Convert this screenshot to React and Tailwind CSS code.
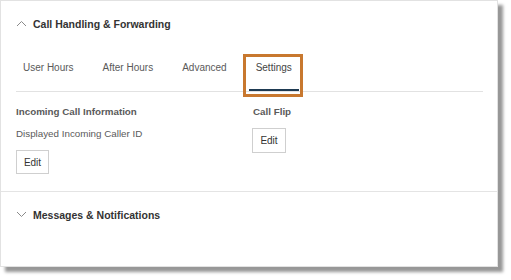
import React from "react";

function Chevron({ up }) {
  return (
    <svg width="11" height="7" viewBox="0 0 11 7" className="shrink-0">
      <polyline
        points={up ? "1,6 5.5,1.5 10,6" : "1,1 5.5,5.5 10,1"}
        fill="none"
        stroke="#8a8a8a"
        strokeWidth="1"
      />
    </svg>
  );
}

const tabs = ["User Hours", "After Hours", "Advanced", "Settings"];

export default function App() {
  return (
    <div
      className="relative w-[511px] h-[280px] bg-white overflow-hidden"
      style={{ fontFamily: '"Liberation Sans", Arial, sans-serif' }}
    >
      <div className="w-[498px] h-[267px] bg-white border border-[#e2e2e2] shadow-[5px_5px_3px_#979797] flex flex-col">
        <div className="border-b border-[#e4e4e4]">
          <div className="h-[45px] flex items-center pl-[15px] gap-[6px]">
            <Chevron up />
            <span className="text-[10.5px] font-bold text-[#333] leading-[12px]">
              Call Handling &amp; Forwarding
            </span>
          </div>
          <div className="ml-[15px] mr-[14px] flex gap-[15px] border-b border-[#e2e2e2]">
            {tabs.map((t, i) => (
              <div
                key={t}
                className={
                  i === 3
                    ? "px-[7px] pt-[16px] pb-[15px] leading-[12px] text-[10px] text-[#444] border-b-2 border-[#1e3a52]"
                    : "px-[7px] pt-[16px] pb-[15px] leading-[12px] text-[10px] text-[#5a5a5a] border-b-2 border-transparent"
                }
              >
                {t}
              </div>
            ))}
          </div>
          <div className="pl-[15px] pt-[14px] pb-[17px] flex">
            <div className="w-[237px] flex flex-col gap-[10px] items-start">
              <div className="text-[9.8px] font-bold text-[#5a5a5a] leading-[12px]">
                Incoming Call Information
              </div>
              <div className="text-[9.8px] text-[#5a5a5a] leading-[12px]">
                Displayed Incoming Caller ID
              </div>
              <button className="w-[33px] h-[24px] border border-[#cfcfcf] bg-white text-[10px] text-[#333] flex items-center justify-center">
                Edit
              </button>
            </div>
            <div className="flex flex-col gap-[10px] items-start">
              <div className="text-[9.8px] font-bold text-[#5a5a5a] leading-[12px]">
                Call Flip
              </div>
              <button className="-ml-px w-[34px] h-[25px] border border-[#cfcfcf] bg-white text-[10px] text-[#333] flex items-center justify-center">
                Edit
              </button>
            </div>
          </div>
        </div>
        <div className="h-[45px] flex items-center pl-[15px] gap-[6px]">
          <Chevron />
          <span className="text-[10.5px] font-bold text-[#333] leading-[12px]">
            Messages &amp; Notifications
          </span>
        </div>
      </div>
      <div className="absolute left-[243px] top-[54px] w-[60px] h-[43px] border-[3px] border-[#c8782f]" />
    </div>
  );
}
